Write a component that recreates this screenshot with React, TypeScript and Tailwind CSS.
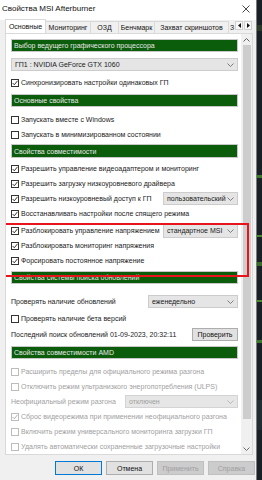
import React from 'react';

const font = { fontFamily: '"Liberation Sans", Arial, sans-serif' };

const Chevron = ({ color = '#606060' }: { color?: string }) => (
  <svg width="7" height="4" viewBox="0 0 7 4" className="shrink-0">
    <path d="M0.5 0.5 L3.5 3.5 L6.5 0.5" fill="none" stroke={color} strokeWidth="0.9" />
  </svg>
);

const Box = ({ checked, disabled }: { checked?: boolean; disabled?: boolean }) => (
  <div
    className={`w-[8px] h-[8px] shrink-0 border bg-white flex items-center justify-center ${
      disabled ? 'border-[#bcbcbc]' : 'border-[#333333]'
    }`}
  >
    {checked && (
      <svg width="6" height="6" viewBox="0 0 6 6">
        <path d="M0.6 3 L2.3 4.8 L5.5 0.8" fill="none" stroke={disabled ? '#a8a8a8' : '#222'} strokeWidth="0.9" />
      </svg>
    )}
  </div>
);

const Check = ({
  label,
  checked,
  disabled,
  children,
}: {
  label: string;
  checked?: boolean;
  disabled?: boolean;
  children?: React.ReactNode;
}) => (
  <div className="h-[15px] flex items-center">
    <Box checked={checked} disabled={disabled} />
    <span className={`ml-[2px] whitespace-nowrap ${disabled ? 'text-[#a0a0a0]' : 'text-[#1a1a1a]'}`}>{label}</span>
    {children}
  </div>
);

const Header = ({ title, className = '' }: { title: string; className?: string }) => (
  <div className={`h-[14px] bg-[#0b5c0b] border border-[#c8c8c8] flex items-center pl-[2px] text-[#e8e8e8] ${className}`}>
    {title}
  </div>
);

const Select = ({ value, className = '', disabled }: { value: string; className?: string; disabled?: boolean }) => (
  <div
    className={`h-[13px] border flex items-center justify-between pl-[3px] pr-[3px] ${
      disabled ? 'bg-[#e6e6e6] border-[#d4d4d4] text-[#a0a0a0]' : 'bg-[#e5e5e5] border-[#cccccc] text-[#1a1a1a]'
    } ${className}`}
  >
    <span className="whitespace-nowrap">{value}</span>
    <Chevron color={disabled ? '#b0b0b0' : '#707070'} />
  </div>
);

const Btn = ({ label, primary, disabled }: { label: string; primary?: boolean; disabled?: boolean }) => (
  <div
    className={`w-[47px] h-[14px] flex items-center justify-center border ${
      primary
        ? 'border-[#0078d7] bg-[#e1e1e1] text-[#111]'
        : disabled
        ? 'border-[#bfbfbf] bg-[#cccccc] text-[#a0a0a0]'
        : 'border-[#adadad] bg-[#e1e1e1] text-[#111]'
    }`}
  >
    {label}
  </div>
);

const tabs = [
  { t: 'Мониторинг', w: 'w-[45px]' },
  { t: 'ОЗД', w: 'w-[28px]' },
  { t: 'Бенчмарк', w: 'w-[36px]' },
  { t: 'Захват скриншотов', w: 'w-[74px]' },
];

export default function App() {
  return (
    <div className="w-[262px] h-[480px] flex overflow-hidden text-[7px] leading-none" style={font}>
      <div className="w-[257px] h-full bg-[#f0f0f0] flex flex-col border-r border-[#7a7a7a]">
        {/* title bar */}
        <div className="h-[17px] bg-white flex items-center justify-between pl-[2px] pr-[6px] shrink-0">
          <span className="text-[8px] text-[#111]">Свойства MSI Afterburner</span>
          <svg width="8" height="8" viewBox="0 0 8 8">
            <path d="M0.5 0.5 L7.5 7.5 M7.5 0.5 L0.5 7.5" stroke="#333" strokeWidth="0.9" />
          </svg>
        </div>
        <div className="h-[3px] bg-white shrink-0" />

        {/* tabs */}
        <div className="flex items-end h-[13px] pl-[5px] shrink-0 relative z-10">
          <div className="w-[41px] h-[14px] bg-white border border-b-0 border-[#d9d9d9] flex items-center justify-center text-[#111]">
            Основные
          </div>
          {tabs.map(({ t, w }) => (
            <div
              key={t}
              className={`${w} h-[12px] bg-[#f0f0f0] border border-b-0 border-l-0 border-[#d9d9d9] flex items-center justify-center text-[#111] whitespace-nowrap`}
            >
              {t}
            </div>
          ))}
          <div className="h-[12px] w-[6px] overflow-hidden flex items-center pl-[1px] text-[#111]">З</div>
          <div className="flex gap-[1px] self-start mt-[1px]">
            <div className="w-[8px] h-[9px] border border-[#d0d0d0] bg-[#f7f7f7] flex items-center justify-center">
              <svg width="3" height="5" viewBox="0 0 3 5"><path d="M3 0 L0 2.5 L3 5Z" fill="#111" /></svg>
            </div>
            <div className="w-[8px] h-[9px] border border-[#d0d0d0] bg-[#f7f7f7] flex items-center justify-center">
              <svg width="3" height="5" viewBox="0 0 3 5"><path d="M0 0 L3 2.5 L0 5Z" fill="#111" /></svg>
            </div>
          </div>
        </div>

        {/* content panel */}
        <div className="ml-[5px] w-[248px] h-[422px] bg-white border border-[#d9d9d9] flex overflow-hidden shrink-0 relative">
          <div className="flex-1 flex flex-col pl-[5px] pr-[3px] pt-[5px]">
            <Header title="Выбор ведущего графического процессора" />
            <Select value="ГП1 : NVIDIA GeForce GTX 1060" className="mt-[6px] h-[14px]" />
            <div className="mt-[4px]">
              <Check label="Синхронизировать настройки одинаковых ГП" checked />
            </div>
            <Header title="Основные свойства" className="mt-[4px]" />
            <div className="mt-[5px]">
              <Check label="Запускать вместе с Windows" />
              <Check label="Запускать в минимизированном состоянии" />
            </div>
            <Header title="Свойства совместимости" className="mt-[2px] h-[15px]" />
            <div className="mt-[3px]">
              <Check label="Разрешить управление видеоадаптером и мониторинг" checked />
              <Check label="Разрешить загрузку низкоуровневого драйвера" checked />
              <Check label="Разрешить низкоуровневый доступ к ГП" checked>
                <Select value="пользовательский" className="ml-auto w-[75px]" />
              </Check>
              <Check label="Восстанавливать настройки после спящего режима" checked />
            </div>
            <div className="mt-[2px]">
              <Check label="Разблокировать управление напряжением" checked>
                <Select value="стандартное MSI" className="ml-auto w-[75px] h-[14px]" />
              </Check>
              <Check label="Разблокировать мониторинг напряжения" checked />
              <Check label="Форсировать постоянное напряжение" checked />
            </div>
            <Header title="Свойства системы поиска обновлений" className="mt-[3px]" />
            <div className="mt-[11px] h-[13px] flex items-center">
              <span className="text-[#1a1a1a]">Проверять наличие обновлений</span>
              <Select value="еженедельно" className="ml-auto w-[90px]" />
            </div>
            <div className="mt-[3px]">
              <Check label="Проверять наличие бета версий" />
            </div>
            <div className="mt-[1px] h-[15px] flex items-center">
              <span className="text-[#1a1a1a] whitespace-nowrap">Последний поиск обновлений 01-09-2023, 20:32:11</span>
              <div className="ml-auto w-[46px] h-[13px] bg-[#e1e1e1] border border-[#adadad] flex items-center justify-center text-[#111]">
                Проверить
              </div>
            </div>
            <Header title="Свойства совместимости AMD" className="mt-[5px]" />
            <div className="mt-[5px]">
              <Check label="Расширить пределы для официального режима разгона" disabled />
              <Check label="Отключить режим ультранизкого энергопотребления (ULPS)" disabled />
              <div className="h-[15px] flex items-center">
                <span className="text-[#a0a0a0] whitespace-nowrap">Неофициальный режим разгона</span>
                <Select value="отключен" className="ml-auto w-[113px]" disabled />
              </div>
              <Check label="Сброс видеорежима при применении неофициального разгона" checked disabled />
              <Check label="Включить режим универсального мониторинга загрузки ГП" disabled />
              <Check label="Удалять автоматически сохраненные загрузочные настройки" disabled />
            </div>
          </div>

          {/* scrollbar */}
          <div className="w-[11px] h-full bg-[#f0f0f0] flex flex-col items-center shrink-0">
            <div className="h-[11px] flex items-center justify-center">
              <svg width="7" height="4" viewBox="0 0 7 4">
                <path d="M0.5 3.5 L3.5 0.5 L6.5 3.5" fill="none" stroke="#606060" strokeWidth="1" />
              </svg>
            </div>
            <div className="w-[8px] h-[374px] bg-[#cdcdcd]" />
            <div className="flex-1" />
            <div className="h-[11px] flex items-center justify-center">
              <Chevron color="#606060" />
            </div>
          </div>

          {/* red annotation */}
          <div className="absolute left-[-3px] top-[189px] w-[246px] h-[54px] border-2 border-[#e8141c] pointer-events-none" />
        </div>

        {/* bottom buttons */}
        <div className="mt-[6px] flex justify-end gap-[4px] pr-[1px]">
          <Btn label="ОК" primary />
          <Btn label="Отмена" />
          <Btn label="Применить" disabled />
          <Btn label="Справка" disabled />
        </div>
      </div>

      {/* background behind window */}
      <svg width="5" height="480" viewBox="0 0 5 480" className="shrink-0">
        <rect width="5" height="480" fill="#1a2126" />
        <rect x="0" y="25" width="5" height="6" fill="#2b3a2a" />
        <rect x="0" y="175" width="5" height="3" fill="#3f7a2a" />
        <rect x="0" y="235" width="5" height="2" fill="#4a8a2a" />
        <rect x="0" y="262" width="5" height="4" fill="#3a6a28" />
        <rect x="0" y="300" width="5" height="2" fill="#4a8a2a" />
        <rect x="0" y="340" width="5" height="3" fill="#3f7a2a" />
        <rect x="0" y="400" width="5" height="30" fill="#222c33" />
      </svg>
    </div>
  );
}
